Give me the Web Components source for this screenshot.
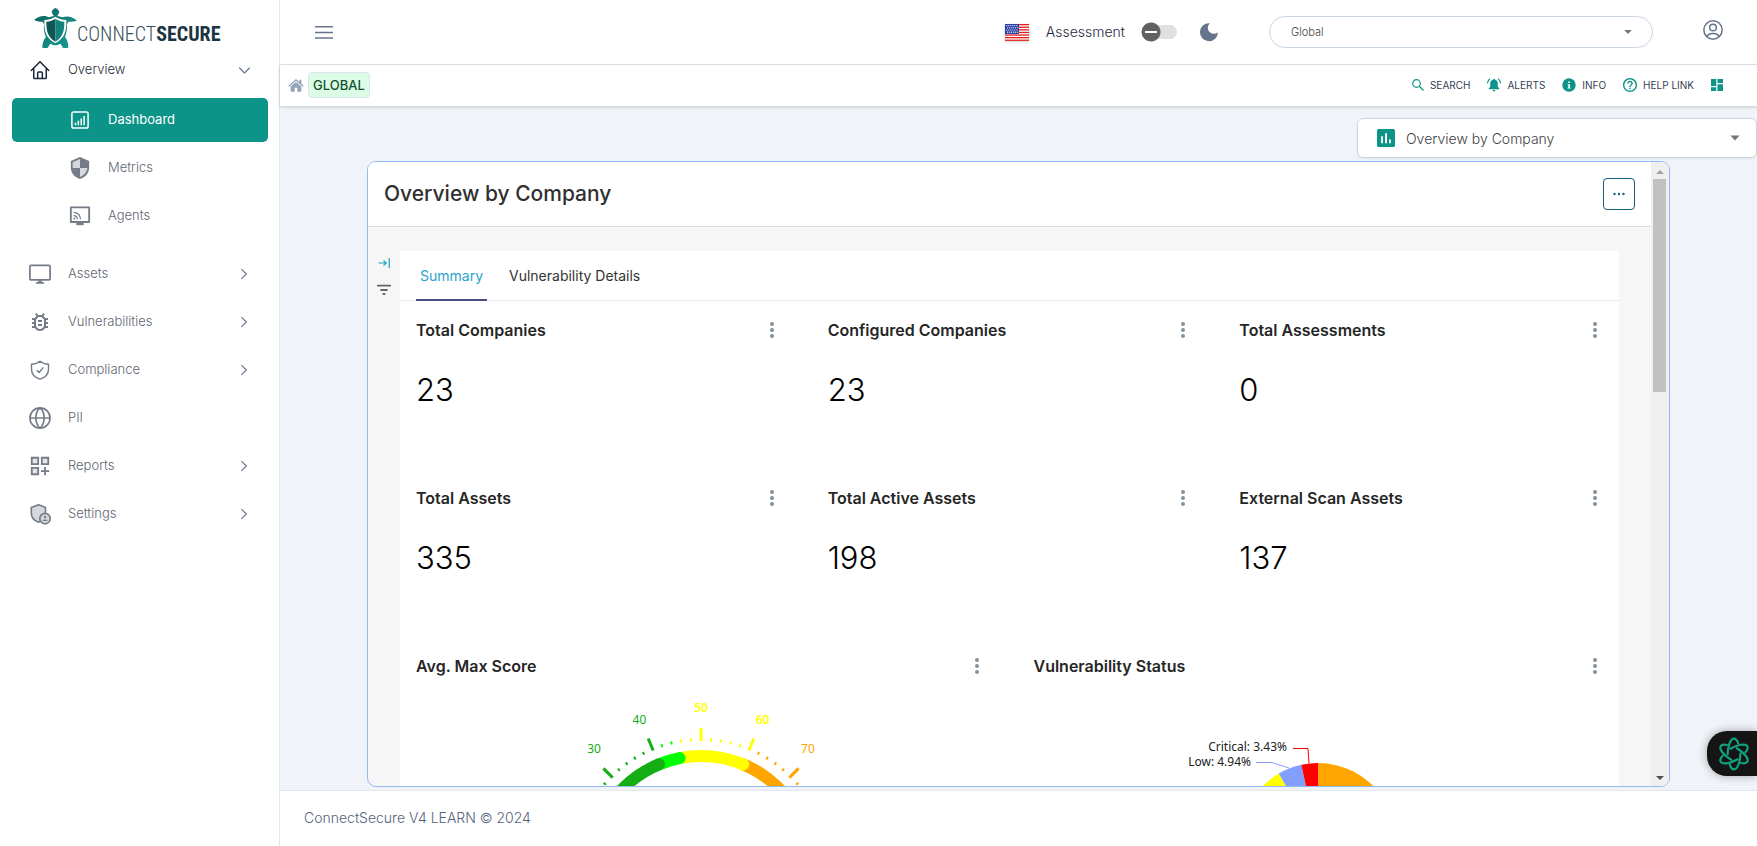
<!DOCTYPE html>
<html lang="en">
<head>
<meta charset="utf-8">
<meta name="viewport" content="width=device-width, initial-scale=1">
<title>ConnectSecure</title>
<style>
  :root{
    --accent:#0d9488;
    --muted:#5f6672;
    --slate:#64748b;
    --line:#cbd5e1;
    --page:#f0f4f9;
  }
  body{
    margin:0;
    font-family:Inter, "Liberation Sans", sans-serif;
    font-size:14px;
    color:#1e293b;
  }
</style>
</head>
<body>
<app-shell>
  <side-bar slot="side"></side-bar>
  <top-bar slot="top"></top-bar>
  <crumb-bar slot="top"></crumb-bar>
  <board-select></board-select>
  <report-panel heading="Overview by Company">
    <metric-card label="Total Companies">23</metric-card>
    <metric-card label="Configured Companies">23</metric-card>
    <metric-card label="Total Assessments">0</metric-card>
    <metric-card label="Total Assets">335</metric-card>
    <metric-card label="Total Active Assets">198</metric-card>
    <metric-card label="External Scan Assets">137</metric-card>
    <metric-card label="Avg. Max Score" wide><gauge-chart></gauge-chart></metric-card>
    <metric-card label="Vulnerability Status" wide><pie-chart></pie-chart></metric-card>
  </report-panel>
  <app-footer slot="foot">ConnectSecure V4 LEARN © 2024</app-footer>
</app-shell>

<script>
const line = (d, w = 1.5) => `<path d="${d}" fill="none" stroke="currentColor" stroke-width="${w}" stroke-linecap="round" stroke-linejoin="round"/>`

// all on a 24x24 grid
const icons = {
  home: line('M1.5 12.5 12 2l10.5 10.5M4.5 10v11.2c0 .6.4 1 1 1h13c.6 0 1-.4 1-1V10M9.2 22v-6.5c0-.6.4-1 1-1h3.6c.6 0 1 .4 1 1V22', 1.8),
  chart: '<rect x="1.2" y="1.2" width="21.6" height="21.6" rx="2.5" fill="none" stroke="currentColor" stroke-width="2"/><path d="M5 15.500h2V19H5zM8.800 13h2v6h-2zM12.600 10h2v9h-2zM16.500 6.500h2V19h-2z" fill="currentColor"/>',
  shieldHalf: '<path d="M12 0 2 4.400v7C2 17.500 6.300 22.300 12 24c5.700-1.700 10-6.500 10-12.600v-7z" fill="currentColor"/><path d="M12 2.200V12H4V5.700zM12 12h8c-.5 4.500-3.600 8.200-8 9.800z" fill="#d5d8dc"/>',
  cast: '<path d="M2 2.500h20v16H2z" fill="none" stroke="currentColor" stroke-width="2" stroke-linejoin="round"/><path d="M8 18h8v4H8z" fill="currentColor"/><path d="M5 8c4.200 0 7.500 3.300 7.500 7.500M5 11.500c2.300 0 4 1.700 4 4" fill="none" stroke="currentColor" stroke-width="1.400"/><circle cx="5.800" cy="14.800" r="1.100" fill="currentColor"/>',
  monitor: '<rect x="1" y="2.500" width="22" height="16" rx="1" fill="none" stroke="currentColor" stroke-width="1.900"/><path d="M10.200 18.500h3.600v2.300h2.400v1.900H7.800v-1.900h2.400z" fill="currentColor"/>',
  bug: '<path fill="currentColor" d="M20 8h-2.810c-.45-.78-1.070-1.450-1.820-1.960L17 4.410 15.590 3l-2.170 2.170C12.960 5.060 12.490 5 12 5s-.96.06-1.410.17L8.410 3 7 4.410l1.620 1.630C7.880 6.550 7.260 7.220 6.810 8H4v2h2.090c-.05.33-.09.66-.09 1v1H4v2h2v1c0 .34.04.67.09 1H4v2h2.810c1.040 1.790 2.970 3 5.190 3s4.150-1.210 5.190-3H20v-2h-2.090c.05-.33.09-.66.09-1v-1h2v-2h-2v-1c0-.34-.04-.67-.09-1H20V8zm-4 4v3c0 .22-.03.47-.07.7l-.1.65-.37.65c-.72 1.240-2.040 2-3.460 2s-2.740-.77-3.460-2l-.37-.64-.1-.65C8.030 15.480 8 15.230 8 15v-4c0-.23.03-.48.07-.7l.1-.65.37-.65c.3-.52.72-.97 1.210-1.310l.57-.39.74-.18c.31-.08.63-.12.94-.12.32 0 .63.04.95.12l.68.16.61.42c.5.34.91.78 1.210 1.310l.38.65.1.65c.04.22.07.47.07.69v1zm-6 2h4v2h-4zm0-4h4v2h-4z"/>',
  shieldCheck: line('M12 1.500C9 4 6 5 1.800 5v6c0 6 4 10 10.200 12 6.200-2 10.200-6 10.200-12V5C18 5 15 4 12 1.500zM8.500 12.500l2.500 2.500 4.500-5.500', 1.700),
  globe: line('M12 1a11 11 0 1 0 0 22 11 11 0 0 0 0-22zM1 12h22M12 1c-6 5-6 17 0 22M12 1c6 5 6 17 0 22', 1.800),
  gridPlus: '<path d="M3 3h7v7H3zM14 3h7v7h-7zM3 14h7v7H3z" fill="#e4e6e9" stroke="currentColor" stroke-width="2"/><path d="M17.500 13v9M13 17.500h9" stroke="currentColor" stroke-width="2"/>',
  shieldUser: '<path d="M10.500 2 2.500 5v6c0 5 3.300 8.600 8 10 4.500-1.400 7.500-5 7.500-10V5z" fill="#d5d8dc" stroke="currentColor" stroke-width="1.800" stroke-linejoin="round"/><circle cx="17.500" cy="17" r="5.700" fill="#d5d8dc" stroke="currentColor" stroke-width="1.800"/><circle cx="17.500" cy="15.300" r="1.300" fill="currentColor"/><path d="M14.800 19.500c.5-2 5-2 5.400 0z" fill="currentColor"/>',
  right: line('M8.500 5 15.500 12l-7 7', 1.600),
  down: line('M4 8l8 8 8-8', 1.800),
  menu: '<path d="M0 5h24M0 12.500h24M0 20h24" stroke="currentColor" stroke-width="2"/>',
  moon: '<path d="M13 .3A12 12 0 1 0 23.900 12.300 7 7 0 0 1 13 .3z" fill="currentColor"/>',
  user: line('M12 1a11 11 0 1 0 0 22 11 11 0 0 0 0-22zM12 5a4 4 0 1 0 0 8 4 4 0 0 0 0-8zM5 20c1-5 13-5 14 0', 1.800),
  house: '<path d="M12 3 .5 13l1.300 1.500L12 5.800l10.200 8.700 1.300-1.500L20 9.800V4h-3v3.300z" fill="currentColor"/><path d="M12 7.500 4 14.300V21c0 .6.400 1 1 1h5v-6h4v6h5c.6 0 1-.4 1-1v-6.700z" fill="currentColor"/>',
  search: '<g fill="none" stroke="currentColor" stroke-width="2.400"><circle cx="9" cy="9" r="7.600"/><path d="M14.500 14.500l8.500 8.500"/></g>',
  bell: '<path d="M12 1.500c-1 0-1.800.7-1.800 1.700C7 4 5.500 6.500 5.500 9.500V15L3 18v1.200h18V18l-2.500-3V9.500c0-3-1.500-5.500-4.700-6.300 0-1-.8-1.700-1.800-1.700zM9.500 20.500a2.500 2.500 0 0 0 5 0z" fill="currentColor"/>' + line('M4.500 1.800C2.500 3.500 1.300 5.800 1 8.500M19.500 1.800c2 1.700 3.200 4 3.500 6.700', 2),
  info: '<circle cx="12" cy="12" r="11.500" fill="currentColor"/><path d="M10.600 6h3v2.500h-3zM9.500 10.500h4.100v6h1.200v1.700H9.500v-1.700h1.200v-4.300H9.500z" fill="#fff"/>',
  help: '<path fill="currentColor" transform="translate(-2.400 -2.400) scale(1.200)" d="M11 18h2v-2h-2v2zm1-16C6.480 2 2 6.480 2 12s4.480 10 10 10 10-4.480 10-10S17.520 2 12 2zm0 18c-4.410 0-8-3.590-8-8s3.590-8 8-8 8 3.590 8 8-3.590 8-8 8zm0-14c-2.210 0-4 1.790-4 4h2c0-1.100.9-2 2-2s2 .9 2 2c0 2-3 1.750-3 5h2c0-2.250 3-2.500 3-5 0-2.210-1.790-4-4-4z"/>',
  tiles: '<path fill="currentColor" d="M0 0h10.500v14H0zM0 16.500h10.500V24H0zM13 10.500h11V24H13zM13 0h11v8H13z"/>',
  report: '<rect width="24" height="24" rx="2" fill="currentColor"/><path d="M5.500 9.500H8V19H5.500zM10.800 5.500h2.500V19h-2.500zM16 14h2.500v5H16z" fill="#fff"/>',
  collapse: '<path d="M1 12h15M11 7l5.500 5-5.500 5M22.500 2v20" fill="none" stroke="currentColor" stroke-width="2.400"/>',
  filter: '<path d="M1.500 4.500h21M7 12h10M11 19h2" stroke="currentColor" stroke-width="3.400" stroke-linecap="round"/>',
  caret: '<path d="M1 6h22L12 18z" fill="currentColor"/>',
  dots: '<circle cx="12" cy="3" r="3"/><circle cx="12" cy="12" r="3"/><circle cx="12" cy="21" r="3"/>',
  more: '<circle cx="3" cy="12" r="2.400"/><circle cx="12" cy="12" r="2.400"/><circle cx="21" cy="12" r="2.400"/>'
}

class CsIcon extends HTMLElement{
  constructor(){
    super()
    this.attachShadow({mode:'open'})
  }
  connectedCallback(){
    const size = this.getAttribute('size') || 20
    this.shadowRoot.innerHTML = `
    <style>
      :host{display:inline-flex; flex:none}
      svg{display:block; fill:currentColor; overflow:visible}
    </style>
    <svg width="${size}" height="${size}" viewBox="0 0 24 24" aria-hidden="true">${icons[this.getAttribute('name')]}</svg>`
  }
}
customElements.define('cs-icon', CsIcon)

class AppShell extends HTMLElement{
  constructor(){
    super()
    this.attachShadow({mode:'open'}).innerHTML = `
    <style>
      :host{display:flex; height:100vh; background:var(--page)}
      .column{flex:1; min-width:0; display:flex; flex-direction:column}
      main{flex:1; min-height:0; display:flex; flex-direction:column; padding:12px 0 3px; gap:3px}
    </style>
    <slot name="side"></slot>
    <div class="column">
      <slot name="top"></slot>
      <main><slot></slot></main>
      <slot name="foot"></slot>
    </div>
    <help-tab></help-tab>`
  }
}
customElements.define('app-shell', AppShell)

class BrandLogo extends HTMLElement{
  constructor(){
    super()
    this.attachShadow({mode:'open'}).innerHTML = `
    <style>
      :host{display:flex; align-items:center; height:40px; padding-left:34px}
      svg{flex:none}
      span{
        font-family:"Roboto Condensed", "Liberation Sans Narrow", "Liberation Sans", sans-serif;
        font-size:20px; line-height:24px; color:#36505a; margin-top:12px; font-weight:300;
      }
      b{color:#1b3540; font-weight:700}
    </style>
    <svg width="43" height="40" viewBox="0 0 129 120" aria-hidden="true">
      <defs><linearGradient id="g" x1="0" x2="1" y2="1">
        <stop offset="0" stop-color="#0f5f5c"/><stop offset="1" stop-color="#17a29a"/>
      </linearGradient></defs>
      <path fill="url(#g)" d="M64 0c5 2 8 5 12 10-1 6-3 10-6 14l16 4c10-4 26-6 43 10-10 3-18 4-26 3l-4 8c0 16-1 28-6 38 6 8 10 17 10 32-6 1-12 1-17 0-2-5-4-9-8-12-10 6-18 6-28 0-4 3-6 7-8 12-5 1-11 1-17 0 0-14 4-24 11-32-6-12-7-24-6-38l-4-8c-8 1-17-1-26-5 16-14 32-14 44-8l16-4c-4-4-6-8-7-14 3-5 7-8 11-10z"/>
      <path fill="#fff" d="M64 26c9 6 19 9 33 10 1 33-5 55-33 70C36 91 30 69 31 36c14-1 24-4 33-10z"/>
      <path fill="#0f5754" d="M64 32c-8 5-16 8-27 9 0 28 4 46 27 60z"/>
      <path fill="#13827c" d="M64 32c8 5 16 8 27 9 0 28-4 46-27 60z"/>
    </svg>
    <span>CONNECT<b>SECURE</b></span>`
  }
}
customElements.define('brand-logo', BrandLogo)

class NavItem extends HTMLElement{
  constructor(){
    super()
    this.attachShadow({mode:'open'})
  }
  connectedCallback(){
    const arrow = this.getAttribute('arrow')
    this.shadowRoot.innerHTML = `
    <style>
      :host{display:block; color:var(--muted)}
      :host([open]){color:#1e293b}
      a{
        display:flex; align-items:center; height:44px; box-sizing:border-box;
        padding:0 16px; border-radius:5px;
        color:inherit; font-size:13px; line-height:20px; font-weight:300; text-decoration:none;
      }
      .icon{width:24px; display:flex; justify-content:center; margin-right:16px; color:#757c87}
      :host([open]) .icon{color:#1e293b}
      .label{flex:1; padding-bottom:2px}
      .arrow{color:var(--slate)}
      :host([sub]) a{padding-left:56px}
      :host([active]) a{background:var(--accent); color:#fff; font-weight:400}
      :host([active]) .icon{color:#fff}
    </style>
    <a href="#">
      <span class="icon"><cs-icon name="${this.getAttribute('icon')}" size="${this.getAttribute('size') || 20}"></cs-icon></span>
      <span class="label"><slot></slot></span>
      ${arrow ? `<cs-icon class="arrow" name="${arrow}" size="${arrow === 'down' ? 15 : 16}"></cs-icon>` : ''}
    </a>`
  }
}
customElements.define('nav-item', NavItem)

class SideBar extends HTMLElement{
  constructor(){
    super()
    this.attachShadow({mode:'open'}).innerHTML = `
    <style>
      :host{
        display:block; flex:none; width:280px; box-sizing:border-box;
        padding-top:8px; background:#fff; border-right:1px solid #e2e8f0;
      }
      nav{display:flex; flex-direction:column; gap:4px; padding:0 11px 0 12px}
      .sub{display:flex; flex-direction:column; gap:4px; padding:2px 0 10px}
    </style>
    <brand-logo></brand-logo>
    <nav>
      <nav-item icon="home" arrow="down" open>Overview</nav-item>
      <div class="sub">
        <nav-item icon="chart" size="18" sub active>Dashboard</nav-item>
        <nav-item icon="shieldHalf" size="22" sub>Metrics</nav-item>
        <nav-item icon="cast" size="22" sub>Agents</nav-item>
      </div>
      <nav-item icon="monitor" size="22" arrow="right">Assets</nav-item>
      <nav-item icon="bug" size="24" arrow="right">Vulnerabilities</nav-item>
      <nav-item icon="shieldCheck" size="20" arrow="right">Compliance</nav-item>
      <nav-item icon="globe" size="22">PII</nav-item>
      <nav-item icon="gridPlus" size="22" arrow="right">Reports</nav-item>
      <nav-item icon="shieldUser" size="22" arrow="right">Settings</nav-item>
    </nav>`
  }
}
customElements.define('side-bar', SideBar)

class UsFlag extends HTMLElement{
  constructor(){
    super()
    let stripes = ''
    for(let i = 0; i < 7; i++) stripes += `<rect y="${i * 2.6}" width="24" height="1.3" fill="#e31d1c"/>`
    let stars = ''
    for(let y = 0; y < 4; y++)
      for(let x = 0; x < 6; x++)
        stars += `<circle cx="${1.800 + x * 2 + (y % 2) * .8}" cy="${1.600 + y * 2.200}" r=".6" fill="#fff"/>`
    this.attachShadow({mode:'open'}).innerHTML = `
    <style>
      :host{display:block; flex:none}
      svg{display:block; box-shadow:0 1px 3px #0003}
    </style>
    <svg width="24" height="17" viewBox="0 0 24 17" role="img" aria-label="English">
      <rect width="24" height="17" fill="#fff"/>${stripes}
      <rect width="14" height="10" fill="#2e42a5"/>${stars}
    </svg>`
  }
}
customElements.define('us-flag', UsFlag)

class TopBar extends HTMLElement{
  constructor(){
    super()
    this.attachShadow({mode:'open'}).innerHTML = `
    <style>
      :host{
        display:flex; align-items:center; flex:none; height:64px; padding:0 34px 0 35px;
        background:#fff; border-bottom:1px solid #e2e4e8;
      }
      button{padding:0; border:0; background:none; display:flex; color:var(--slate)}
      .space{flex:1}
      .switch{display:flex; align-items:center; gap:16px; margin:0 23px 0 17px; font-size:14px; line-height:20px; font-weight:300}
      input{
        appearance:none; margin:0; width:36px; height:20px; border-radius:10px;
        background:
          linear-gradient(#fff, #fff) 4px 9px / 12px 2px no-repeat,
          radial-gradient(circle at 10px 10px, #616161 9px, transparent 10px),
          linear-gradient(#e0e0e0, #e0e0e0) 10px 3px / 19px 14px no-repeat,
          radial-gradient(circle at 29px 10px, #e0e0e0 7px, transparent 7px);
      }
      .field{position:relative; width:384px; margin:0 50px 0 51px; display:flex; align-items:center}
      select{
        appearance:none; width:100%; height:32px; padding:0 48px 0 21px; border:1px solid var(--line);
        border-radius:16px; background:#fff; color:#3f3f46; font-family:inherit; font-size:11px; font-weight:300;
      }
      .field cs-icon{position:absolute; right:21px; color:#757575; pointer-events:none}
      .account{margin-bottom:4px}
    </style>
    <button aria-label="Menu"><cs-icon name="menu" size="18"></cs-icon></button>
    <span class="space"></span>
    <us-flag></us-flag>
    <label class="switch">Assessment <input type="checkbox" role="switch"></label>
    <button aria-label="Dark mode"><cs-icon name="moon" size="18"></cs-icon></button>
    <div class="field">
      <select aria-label="Scope"><option>Global</option></select>
      <cs-icon name="caret" size="8"></cs-icon>
    </div>
    <button class="account" aria-label="Account"><cs-icon name="user" size="20"></cs-icon></button>`
  }
}
customElements.define('top-bar', TopBar)

class CrumbBar extends HTMLElement{
  constructor(){
    super()
    this.attachShadow({mode:'open'}).innerHTML = `
    <style>
      :host{
        display:flex; align-items:center; justify-content:space-between; flex:none; height:41px; box-sizing:border-box;
        padding:0 34px 2px 8px; background:#fff; box-shadow:0 1px 3px #0003;
      }
      div, nav{display:flex; align-items:center}
      div{gap:4px; color:#94a3b8}
      nav{gap:17px}
      a{text-decoration:none}
      nav a{display:flex; align-items:center; gap:6px; color:#334155; font-size:10px; line-height:16px}
      nav cs-icon{color:var(--accent)}
      .tag{
        padding:2px 4px; border:1px solid #dbe5ea; border-radius:4px; background:#dcfce7;
        color:#14532d; font-size:13px; line-height:20px; font-weight:500;
      }
    </style>
    <div>
      <cs-icon name="house" size="16"></cs-icon>
      <a class="tag" href="#">GLOBAL</a>
    </div>
    <nav>
      <a href="#"><cs-icon name="search" size="12"></cs-icon>SEARCH</a>
      <a href="#"><cs-icon name="bell" size="14"></cs-icon>ALERTS</a>
      <a href="#"><cs-icon name="info" size="14"></cs-icon>INFO</a>
      <a href="#"><cs-icon name="help" size="14"></cs-icon>HELP LINK</a>
      <a href="#" aria-label="Dashboards"><cs-icon name="tiles" size="12"></cs-icon></a>
    </nav>`
  }
}
customElements.define('crumb-bar', CrumbBar)

class BoardSelect extends HTMLElement{
  constructor(){
    super()
    this.attachShadow({mode:'open'}).innerHTML = `
    <style>
      :host{position:relative; display:flex; align-items:center; align-self:flex-end; flex:none; width:400px; height:40px}
      select{
        appearance:none; width:100%; height:40px; padding:0 48px 0 48px; border:1px solid var(--line); border-radius:6px;
        background:#fff; color:#3f3f46; font-family:inherit; font-size:14px; font-weight:300; box-shadow:0 1px 2px #0001;
      }
      cs-icon{position:absolute; pointer-events:none}
      .left{left:20px; color:var(--accent)}
      .right{right:17px; color:#757575}
    </style>
    <select aria-label="Dashboard"><option>Overview by Company</option></select>
    <cs-icon class="left" name="report" size="18"></cs-icon>
    <cs-icon class="right" name="caret" size="10"></cs-icon>`
  }
}
customElements.define('board-select', BoardSelect)

class ReportPanel extends HTMLElement{
  constructor(){
    super()
    this.attachShadow({mode:'open'}).innerHTML = `
    <style>
      :host{
        display:flex; flex:1; min-height:0; margin:0 87px; overflow:hidden;
        border:1px solid #93b9f5; border-radius:9px; background:#f6f6f6;
      }
      .view{flex:1; min-width:0; overflow:hidden}
      header{
        display:flex; align-items:center; justify-content:space-between; height:64px; padding:0 16px;
        background:#fff; border-bottom:1px solid #dcdcdc;
      }
      h1{margin:0; font-size:21px; line-height:28px; font-weight:500; color:#303030}
      button{font-family:inherit; background:none; border:0; padding:0}
      .more{
        display:flex; align-items:center; justify-content:center; width:32px; height:32px;
        border:1px solid #14607a; border-radius:4px; background:#fff; color:#14607a;
      }
      .body{display:flex; padding:24px 32px 0 0}
      .tools{display:flex; flex-direction:column; align-items:center; gap:14px; flex:none; width:32px; padding-top:6px}
      .tools button{display:flex; color:#666}
      .tools .on{color:#22a3c9}
      .sheet{flex:1; min-width:0; background:#fff}
      .tabs{display:flex; gap:18px; padding:0 16px; border-bottom:1px solid #e8e8e8}
      .tabs button{height:50px; padding:0 4px; margin-bottom:-1px; border-bottom:2px solid transparent; font-size:14px; color:#333}
      .tabs .on{color:#2ba3cc; border-color:#484c80}
      .grid{display:grid; grid-template-columns:repeat(6, 1fr); grid-auto-rows:minmax(152px, auto); gap:16px; padding-top:1px}
      .bar{
        display:flex; flex-direction:column; align-items:center; gap:4px; flex:none; width:18px; box-sizing:border-box;
        padding:7px 3px 5px 2px; background:#f0f0f0;
      }
      .track{flex:1; align-self:stretch}
      .thumb{height:36%; background:#c1c1c1}
      .bar svg{fill:#a3a3a3; flex:none}
      .bar svg:last-child{fill:#505050}
    </style>
    <section class="view">
      <header>
        <h1></h1>
        <button class="more" aria-label="More"><cs-icon name="more" size="12"></cs-icon></button>
      </header>
      <div class="body">
        <div class="tools">
          <button class="on" aria-label="Collapse"><cs-icon name="collapse" size="12"></cs-icon></button>
          <button aria-label="Filter"><cs-icon name="filter" size="14"></cs-icon></button>
        </div>
        <div class="sheet">
          <div class="tabs" role="tablist">
            <button class="on" role="tab" aria-selected="true">Summary</button>
            <button role="tab" aria-selected="false">Vulnerability Details</button>
          </div>
          <div class="grid"><slot></slot></div>
        </div>
      </div>
    </section>
    <div class="bar" aria-hidden="true">
      <svg width="8" height="6"><path d="M0 5l4-4 4 4z"/></svg>
      <div class="track"><div class="thumb"></div></div>
      <svg width="8" height="6"><path d="M0 1l4 4 4-4z"/></svg>
    </div>`
    this.shadowRoot.querySelector('h1').textContent = this.getAttribute('heading')
  }
}
customElements.define('report-panel', ReportPanel)

class MetricCard extends HTMLElement{
  constructor(){
    super()
    this.attachShadow({mode:'open'}).innerHTML = `
    <style>
      :host{display:block; grid-column:span 2; min-width:0; padding:16px 16px 0}
      :host([wide]){grid-column:span 3}
      header{display:flex; align-items:center; justify-content:space-between}
      h2{margin:0; font-size:16px; line-height:24px; font-weight:600; color:#262626}
      button{display:flex; padding:0; border:0; background:none; color:#84929a}
      .value{font-size:31px; line-height:40px; font-weight:300; color:#000; padding-top:28px}
      :host([wide]) .value{padding:0}
    </style>
    <header><h2></h2><button aria-label="Options"><cs-icon name="dots" size="16"></cs-icon></button></header>
    <div class="value"><slot></slot></div>`
    this.shadowRoot.querySelector('h2').textContent = this.getAttribute('label')
  }
}
customElements.define('metric-card', MetricCard)

const chartStyle = `
  <style>
    :host{display:flex; justify-content:center; font-weight:400}
    svg{display:block; flex:none}
    text{font-family:"Noto Sans", "Open Sans", sans-serif; font-size:12px}
  </style>`

class GaugeChart extends HTMLElement{
  constructor(){
    super()
    const cx = 200, cy = 188
    // 0..100 is spread over 225 degrees, 50 points straight up
    const at = (value, r) => {
      const a = (value - 50) * 2.25 * Math.PI / 180
      return [(cx + r * Math.sin(a)).toFixed(2), (cy - r * Math.cos(a)).toFixed(2)]
    }
    const color = v => v <= 40 ? '#14ae14' : v <= 45 ? '#00ff00' : v <= 60 ? '#ffff00' : '#ffa500'
    const arc = (from, to, c) => `<path d="M${at(from, 110)}A110 110 0 0 1 ${at(to, 110)}" fill="none" stroke="${c}" stroke-width="12" stroke-linecap="round"/>`
    let marks = ''
    for(let v = 0; v <= 100; v += 2){
      const major = v % 10 === 0
      marks += `<path d="M${at(v, 125)}L${at(v, major ? 138 : 128)}" stroke="${color(v)}" stroke-width="${major ? 3 : 2}"/>`
    }
    for(let v = 30; v <= 70; v += 10){
      const [x, y] = at(v, 161)
      const anchor = v === 30 ? 'start' : v === 70 ? 'end' : 'middle'
      marks += `<text x="${x}" y="${y}" dy="${anchor === 'middle' ? 7 : 1}" text-anchor="${anchor}" fill="${color(v)}"${v === 50 || v === 60 ? ' font-weight="600"' : ''}>${v}</text>`
    }
    this.attachShadow({mode:'open'}).innerHTML = `${chartStyle}
    <svg width="400" height="376" role="img" aria-label="Average max score">
      ${arc(60, 100, '#ffa500')}${arc(45, 60, '#ffff00')}${arc(40, 45, '#00ff00')}${arc(0, 40, '#14ae14')}
      ${marks}
    </svg>`
  }
}
customElements.define('gauge-chart', GaugeChart)

class PieChart extends HTMLElement{
  constructor(){
    super()
    const cx = 200, cy = 163, r = 78
    const at = share => {
      const a = share * Math.PI / 50
      return [(cx + r * Math.sin(a)).toFixed(2), (cy - r * Math.cos(a)).toFixed(2)]
    }
    const slice = (from, to, c) => `<path d="M${cx} ${cy}L${at(from)}A${r} ${r} 0 ${to - from > 50 ? 1 : 0} 1 ${at(to)}Z" fill="${c}"/>`
    this.attachShadow({mode:'open'}).innerHTML = `${chartStyle}
    <svg width="400" height="376" role="img" aria-label="Vulnerability status">
      ${slice(0, 60, '#ffa500')}${slice(60, 91.630, '#ffff00')}${slice(91.630, 96.570, '#829fff')}${slice(96.570, 100, '#ff0000')}
      <g fill="none" stroke-width="1">
        <path d="M191 85l-1-14.500h-15" stroke="#ff0000"/>
        <path d="M171 90l-17-5.500h-16" stroke="#829fff"/>
      </g>
      <g fill="#222" text-anchor="end">
        <text x="169" y="73">Critical: 3.43%</text>
        <text x="133" y="88">Low: 4.94%</text>
      </g>
    </svg>`
  }
}
customElements.define('pie-chart', PieChart)

class AppFooter extends HTMLElement{
  constructor(){
    super()
    this.attachShadow({mode:'open'}).innerHTML = `
    <style>
      :host{display:block; flex:none; background:#fff; border-top:1px solid #e2e8f0}
      footer{padding:17px 24px 18px; font-size:14px; line-height:20px; font-weight:300; color:#54637a}
    </style>
    <footer><slot></slot></footer>`
  }
}
customElements.define('app-footer', AppFooter)

// floating assistant button on the window's right edge
class HelpTab extends HTMLElement{
  constructor(){
    super()
    let loops = ''
    for(let i = 0; i < 6; i++)
      loops += `<path d="M10 16.500C10 9 12.500 1.500 16 1.500c2 0 3.200 2 4 4.500" transform="rotate(${i * 60} 16 16)"/>`
    this.attachShadow({mode:'open'}).innerHTML = `
    <style>
      :host{position:absolute; right:0; bottom:70px}
      button{
        display:flex; align-items:center; width:50px; height:45px; padding:0 0 0 10px; border:0;
        border-radius:20px 0 0 20px; background:#151515; box-shadow:0 0 10px #0005;
      }
      g{fill:none; stroke:#0fa47f; stroke-width:2; stroke-linecap:round}
    </style>
    <button aria-label="Assistant"><svg width="34" height="34" viewBox="0 0 32 32"><g>${loops}</g></svg></button>`
  }
}
customElements.define('help-tab', HelpTab)
</script>
</body>
</html>
